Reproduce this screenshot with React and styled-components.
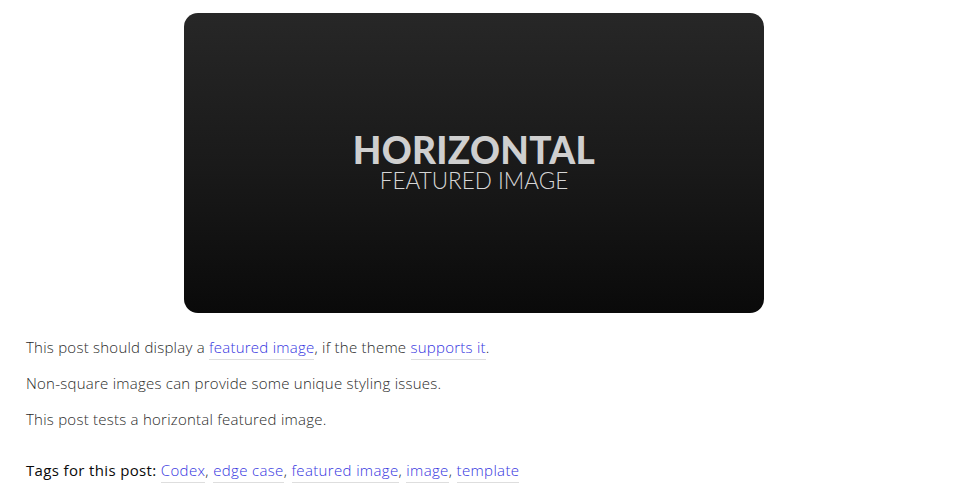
import React from 'react';
import styled, { createGlobalStyle } from 'styled-components';

const GlobalStyle = createGlobalStyle`
  body {
    margin: 0;
    background: #fff;
    font-family: "Open Sans", Lato, sans-serif;
  }
`;

const Page = styled.article`
  padding: 13px 31px 0 26px;
`;

const Featured = styled.div`
  width: 580px;
  height: 300px;
  margin: 0 auto;
  border-radius: 14px;
  background: linear-gradient(180deg, #272727 0%, #1a1a1a 50%, #0a0a0a 100%);
  display: flex;
  flex-direction: column;
  align-items: center;
  justify-content: center;
  color: #cfcfcf;
`;

const Headline = styled.div`
  font-family: Lato, sans-serif;
  font-weight: 900;
  font-size: 37px;
  line-height: 30px;
  letter-spacing: 0.3px;
`;

const Subline = styled.div`
  font-family: Lato, sans-serif;
  font-weight: 300;
  font-size: 22.5px;
  line-height: 22px;
  margin-top: 5px;
  color: #d6d6d6;
`;

const Text = styled.p`
  margin: 0;
  font-size: 15px;
  line-height: 36px;
  font-weight: 300;
  letter-spacing: 0.24px;
  color: #2a2a2a;
  &:first-of-type {
    margin-top: 16px;
  }
`;

const TextLink = styled.a`
  color: #3434e0;
  text-decoration: none;
  border-bottom: 1px solid #dedede;
  padding-bottom: 2px;
`;

const Tags = styled.p`
  margin: 15px 0 0;
  font-size: 15px;
  line-height: 36px;
  font-weight: 300;
  letter-spacing: 0.35px;
  color: #2a2a2a;
`;

const TagsLabel = styled.span`
  color: #0a0a0a;
  font-weight: 400;
`;

const tags = ['Codex', 'edge case', 'featured image', 'image', 'template'];

export default function App() {
  return (
    <>
      <GlobalStyle />
      <Page>
        <Featured>
          <Headline>HORIZONTAL</Headline>
          <Subline>FEATURED IMAGE</Subline>
        </Featured>
        <Text>
          This post should display a <TextLink href="#">featured image</TextLink>, if the theme{' '}
          <TextLink href="#">supports it</TextLink>.
        </Text>
        <Text>Non-square images can provide some unique styling issues.</Text>
        <Text>This post tests a horizontal featured image.</Text>
        <Tags>
          <TagsLabel>Tags for this post:</TagsLabel>{' '}
          {tags.map((t, i) => (
            <React.Fragment key={t}>
              <TextLink href="#">{t}</TextLink>
              {i < tags.length - 1 ? ', ' : ''}
            </React.Fragment>
          ))}
        </Tags>
      </Page>
    </>
  );
}
